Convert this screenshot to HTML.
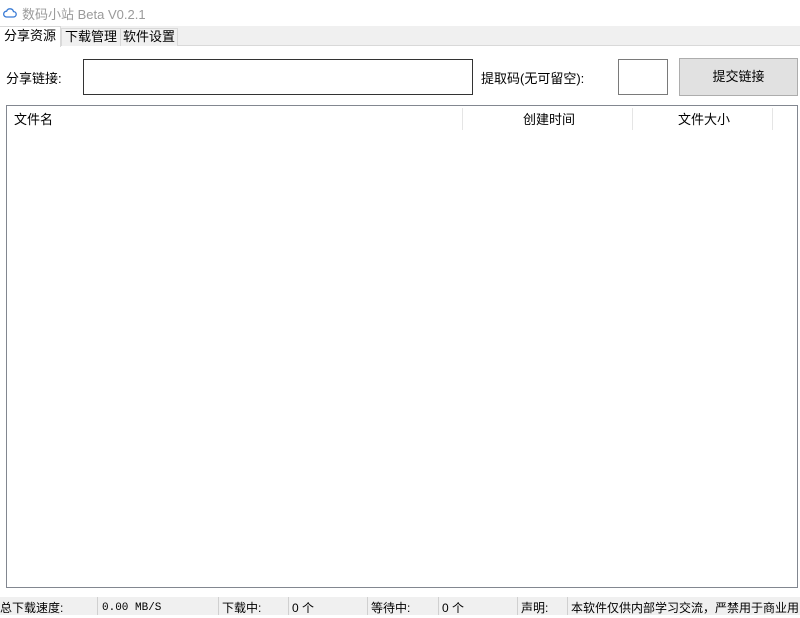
<!DOCTYPE html>
<html><head><meta charset="utf-8"><style>
*{margin:0;padding:0;box-sizing:border-box}
body{width:800px;height:615px;background:#fff;font-family:"Liberation Sans","Noto Sans CJK SC",sans-serif;font-size:13px;color:#000;position:relative;overflow:hidden}
.a{position:absolute}
.title{left:0;top:0;width:800px;height:26px;background:#fff}
.tt{left:22px;top:4px;color:#9a9a9a;font-size:13px}
.tabs{left:0;top:26px;width:800px;height:20px;background:#f0f0f0;border-bottom:1px solid #d9d9d9}
.tab{position:absolute;top:2px;height:18px;border:1px solid #d9d9d9;border-bottom:none;background:#f0f0f0;font-size:13px;line-height:16px;text-align:center}
.sel{top:0;height:21px;background:#fff;border-color:#d9d9d9}
.box{border:1px solid #7a7a7a;background:#fff}
.status{left:0;top:597px;width:800px;height:18px;background:#f0f0f0;font-size:12px;line-height:19px}
.status span{position:absolute;top:2px}
.sep{position:absolute;top:0;width:1px;height:18px;background:#d0d0d0}
.hs{position:absolute;top:2px;width:1px;height:22px;background:#e5e5e5}
</style></head><body>
<div class="a title"></div>
<svg class="a" style="left:3px;top:7px" width="14" height="12" viewBox="0 0 14 12"><path d="M3.5 10 H10.5 A2.7 2.7 0 0 0 10.5 4.6 A3.6 3.6 0 0 0 3.6 4.2 A2.9 2.9 0 0 0 3.5 10 Z" fill="none" stroke="#3a7bd5" stroke-width="1.3"/></svg>
<div class="a tt">数码小站 Beta V0.2.1</div>
<div class="a tabs">
<div class="tab" style="left:61px;width:60px">下载管理</div>
<div class="tab" style="left:120px;width:58px">软件设置</div>
<div class="tab sel" style="left:0;width:61px;line-height:18px;border-left:none">分享资源</div>
</div>
<div class="a" style="left:6px;top:68px">分享链接:</div>
<div class="a box" style="left:83px;top:59px;width:390px;height:36px;border-color:#333"></div>
<div class="a" style="left:481px;top:68px">提取码(无可留空):</div>
<div class="a box" style="left:618px;top:59px;width:50px;height:36px"></div>
<div class="a" style="left:679px;top:58px;width:119px;height:38px;background:#e1e1e1;border:1px solid #adadad;text-align:center;line-height:36px">提交链接</div>
<div class="a" style="left:6px;top:105px;width:792px;height:483px;border:1px solid #828790;background:#fff">
<div class="a" style="left:7px;top:3px">文件名</div>
<div class="hs" style="left:455px"></div>
<div class="a" style="left:516px;top:3px">创建时间</div>
<div class="hs" style="left:625px"></div>
<div class="a" style="left:671px;top:3px">文件大小</div>
<div class="hs" style="left:765px"></div>
</div>
<div class="a status">
<span style="left:0">总下载速度:</span>
<div class="sep" style="left:97px"></div>
<span style="left:102px;font-family:'Liberation Mono',monospace;font-size:11px">0.00 MB/S</span>
<div class="sep" style="left:218px"></div>
<span style="left:222px">下载中:</span>
<div class="sep" style="left:288px"></div>
<span style="left:292px">0 个</span>
<div class="sep" style="left:367px"></div>
<span style="left:371px">等待中:</span>
<div class="sep" style="left:438px"></div>
<span style="left:442px">0 个</span>
<div class="sep" style="left:517px"></div>
<span style="left:521px">声明:</span>
<div class="sep" style="left:567px"></div>
<span style="left:571px;white-space:nowrap">本软件仅供内部学习交流，严禁用于商业用</span>
</div>
</body></html>
